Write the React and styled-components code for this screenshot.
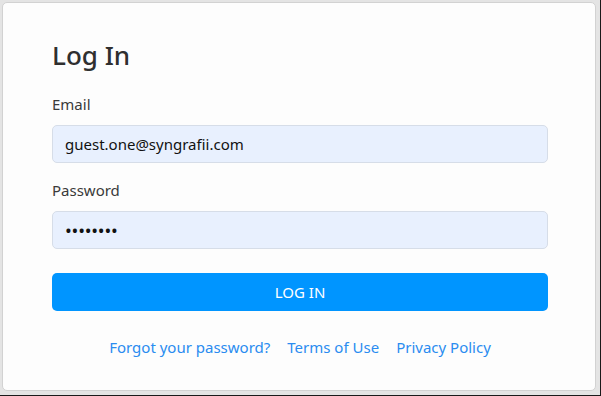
import * as React from 'react'
import styled, { createGlobalStyle } from 'styled-components'

const GlobalStyle = createGlobalStyle`
    html, body {
        margin: 0;
        padding: 0;
        background: #e4e4e4;
    }
    * {
        box-sizing: border-box;
    }
`

const Frame = styled.div`
    width: 601px;
    height: 396px;
    padding: 2px 4px 4px 2px;
    background: #e4e4e4;
    border-right: 1px solid #1a1a1a;
    border-bottom: 1px solid #1a1a1a;
    font-family: "Noto Sans", "Open Sans", sans-serif;
`

const Card = styled.div`
    height: 100%;
    background: #fdfdfd;
    border: 1px solid #d2d2d2;
    border-radius: 5px;
    padding: 34px 47px 0 49px;
    display: flex;
    flex-direction: column;
`

const Title = styled.h1`
    margin: 0 0 21px;
    font-size: 26px;
    font-weight: 500;
    color: #2f2f2f;
    line-height: 36px;
`

const Label = styled.label`
    display: block;
    font-size: 15px;
    color: #3a3a3a;
    line-height: 20px;
    margin-bottom: 11px;
`

const Field = styled.div`
    margin-bottom: ${p => p.$last ? '24px' : '17px'};
`

const Input = styled.input`
    display: block;
    width: 100%;
    height: 38px;
    padding: 0 12px;
    font-family: inherit;
    font-size: ${p => p.type === 'password' ? '18px' : '15px'};
    letter-spacing: ${p => p.type === 'password' ? '-0.2px' : '0'};
    color: #111;
    background: #e8f0fe;
    border: 1px solid #d6dde8;
    border-radius: 5px;
    outline: none;
`

const Button = styled.button`
    width: 100%;
    height: 38px;
    border: none;
    border-radius: 5px;
    background: #0095ff;
    color: #fff;
    font-family: inherit;
    font-size: 15px;
    cursor: pointer;
`

const Links = styled.nav`
    display: flex;
    justify-content: center;
    gap: 17px;
    margin-top: 26px;
`

const Link = styled.a`
    color: #2a8cf0;
    font-size: 15px;
    text-decoration: none;
    line-height: 20px;
`

const App = () => {
    return (
        <>
            <GlobalStyle />
            <Frame>
                <Card>
                    <Title>Log In</Title>
                    <Field>
                        <Label htmlFor='email'>Email</Label>
                        <Input id='email' type='email' defaultValue='guest.one@syngrafii.com' />
                    </Field>
                    <Field $last>
                        <Label htmlFor='password'>Password</Label>
                        <Input id='password' type='password' defaultValue='password' />
                    </Field>
                    <Button>LOG IN</Button>
                    <Links>
                        <Link href='#'>Forgot your password?</Link>
                        <Link href='#'>Terms of Use</Link>
                        <Link href='#'>Privacy Policy</Link>
                    </Links>
                </Card>
            </Frame>
        </>
    )
}

export default App
